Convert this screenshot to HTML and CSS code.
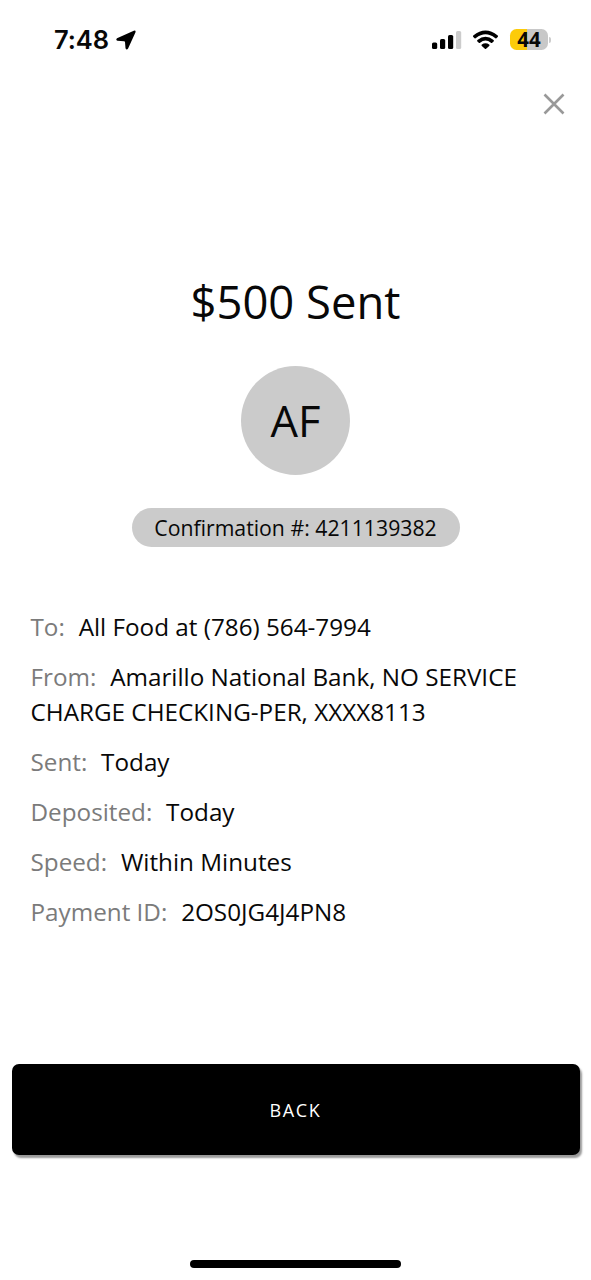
FILE: index.html
```html
<!DOCTYPE html>
<html lang="en">
<head>
<meta charset="utf-8">
<title>Payment sent</title>
<link rel="stylesheet" href="styles.css">
</head>
<body>
<div class="screen">
  <header class="status">
    <div class="status-left">
      <span class="time">7:48</span>
      <svg class="location" width="20" height="20" viewBox="0 0 20 20"><path d="M17.8 .7L1 8.2Q-.6 9.8 1.4 10.7L8 11.2Q8.9 11.3 9 12.1L9.5 18.2Q10.6 20.4 12.1 18.5L19.4 2.4Q20.2 0 17.8 .7Z"/></svg>
    </div>
    <div class="status-right">
      <svg class="signal" width="30" height="20" viewBox="0 0 30 20"><rect x="0" y="12.5" width="5.2" height="6.5" rx="1.6"/><rect x="8" y="9" width="5.2" height="10" rx="1.6"/><rect x="16" y="5" width="5.2" height="14" rx="1.6"/><rect x="24" y="1" width="5.2" height="18" rx="1.6" fill="#ccc"/></svg>
      <svg class="wifi" width="27" height="20" viewBox="0 0 27 20"><path d="M1.3 5.6Q13.5-4.4 25.7 5.6Q26.4 6.3 25.7 7L24.4 8.2Q23.7 8.7 23 8.1Q13.5.6 4 8.1Q3.3 8.7 2.6 8.2L1.3 7Q.6 6.3 1.3 5.6Z"/><path d="M5.4 10Q13.5 3.4 21.6 10Q22.3 10.7 21.6 11.4L20.2 12.7Q19.6 13.2 18.9 12.7Q13.5 8.5 8.1 12.7Q7.4 13.2 6.8 12.7L5.4 11.4Q4.7 10.7 5.4 10Z"/><path d="M9.8 14.6Q13.5 11.8 17.2 14.6Q17.9 15.2 17.2 15.9L14.1 18.7Q13.5 19.2 12.9 18.7L9.8 15.9Q9.1 15.2 9.8 14.6Z"/></svg>
      <div class="battery">44</div>
      <span class="battery-tip"></span>
    </div>
  </header>
  <div class="close-row"><svg width="22" height="22" viewBox="0 0 22 22"><path d="M1.5 1.5L20.5 20.5M20.5 1.5L1.5 20.5"/></svg></div>
  <h1 class="title">$500 Sent</h1>
  <div class="avatar">AF</div>
  <div class="confirmation">Confirmation #: 4211139382</div>
  <main class="details">
    <p><span class="label">To:</span> All Food at (786) 564-7994</p>
    <p><span class="label">From:</span> Amarillo National Bank, NO SERVICE CHARGE CHECKING-PER, XXXX8113</p>
    <p><span class="label">Sent:</span> Today</p>
    <p><span class="label">Deposited:</span> Today</p>
    <p><span class="label">Speed:</span> Within Minutes</p>
    <p><span class="label">Payment ID:</span> 2OS0JG4J4PN8</p>
  </main>
  <button class="back">BACK</button>
  <div class="home-indicator"></div>
</div>
</body>
</html>
```

FILE: styles.css
```css
* { box-sizing: border-box; }
body { margin: 0; background: #fff; color: #080808; font-family: "Open Sans", sans-serif; }
.screen { height: 1280px; display: flex; flex-direction: column; align-items: center; overflow: hidden; }
.status { width: 100%; height: 79px; padding: 0 40px 0 54px; display: flex; justify-content: space-between; align-items: center; font-family: Inter, sans-serif; }
.status-left, .status-right { display: flex; align-items: center; }
.time { font-size: 25.5px; font-weight: 600; letter-spacing: -0.1px; }
.location { margin-left: 7px; }
.wifi { margin: 0 11px 0 11px; }
.signal { margin-right: -1px; }
.battery { width: 38px; height: 21px; border-radius: 6.5px; background: linear-gradient(90deg, #fccb0a 0 17px, #c8c8c8 17px); font: 700 20.5px/21px "Open Sans", sans-serif; text-align: center; }
.battery-tip { width: 2px; height: 6px; margin-left: 1px; border-radius: 0 2px 2px 0; background: #ccc; }
.close-row { width: 100%; height: 22px; margin-top: 14px; padding-right: 26px; display: flex; justify-content: flex-end; }
.close-row path { fill: none; stroke: #999; stroke-width: 2.6; }
.title { margin: 155px 0 0; font-size: 45.4px; font-weight: 400; line-height: 62px; }
.avatar { width: 109px; height: 109px; margin-top: 34px; border-radius: 50%; background: #cbcbcb; font-size: 43.5px; line-height: 110px; text-align: center; }
.confirmation { width: 328px; height: 39px; margin-top: 33px; border-radius: 20px; background: #cbcbcb; font-size: 21.25px; line-height: 39px; text-align: center; white-space: nowrap; }
.details { width: 100%; margin-top: 62px; padding: 0 30px 0 30.5px; font-size: 24.25px; line-height: 35px; }
.details p { margin: 0 0 15px; }
.label { margin-right: 7.5px; color: #7b7b7b; }
.back { width: 568px; height: 91px; margin-top: 120px; padding: 0; border: 0; border-radius: 7px; background: #000; color: #fff; box-shadow: 2px 3px 2px #999; font: 400 18px "Open Sans", sans-serif; letter-spacing: 1.6px; }
.home-indicator { width: 211px; height: 8px; margin-top: 105px; border-radius: 4px; background: #000; }
```
